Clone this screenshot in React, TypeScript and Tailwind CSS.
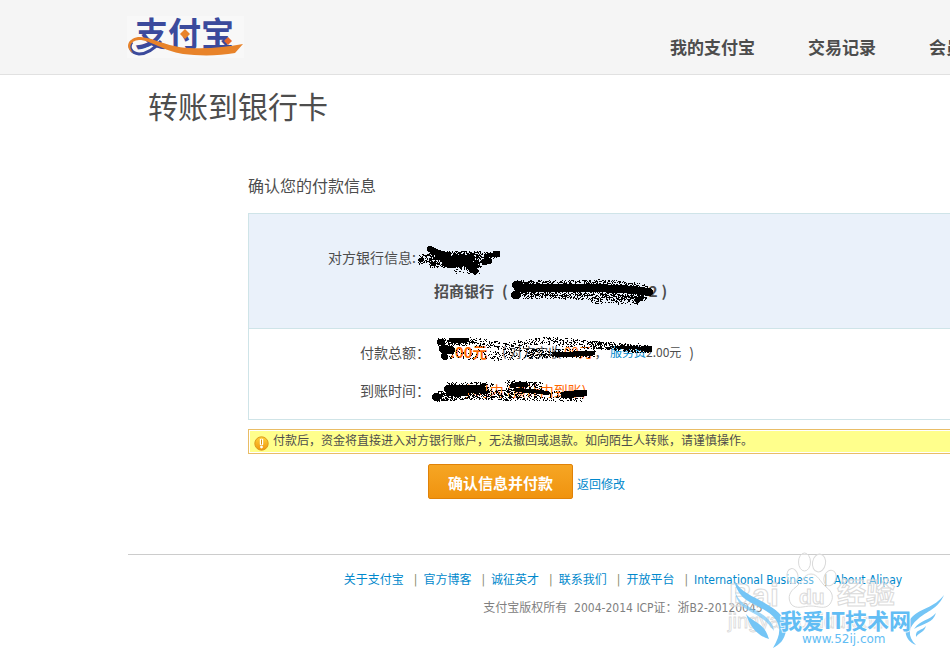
import { clsx } from "clsx";

type Point = [number, number];

type Spray = {
  line: Point[];
  spread: number;
  count: number;
};

const NAV_LINKS = ["我的支付宝", "交易记录", "会员"];

const FOOTER_LINKS = [
  "关于支付宝",
  "官方博客",
  "诚征英才",
  "联系我们",
  "开放平台",
  "International Business",
  "About Alipay",
];

// Small seeded generator so the speckles land in the same place every render
function makeRandom(seed: number) {
  let s = seed;
  return () => {
    s = (s * 16807) % 2147483647;
    return s / 2147483647;
  };
}

function sprayPath(sprays: Spray[], seed: number) {
  const rand = makeRandom(seed);
  let d = "";
  for (const { line, spread, count } of sprays) {
    for (let i = 0; i < count; i++) {
      const t = rand() * (line.length - 1);
      const k = Math.floor(t);
      const [x0, y0] = line[k];
      const [x1, y1] = line[k + 1];
      const x = Math.round(x0 + (x1 - x0) * (t - k) + (rand() - 0.5) * 3);
      const y = Math.round(y0 + (y1 - y0) * (t - k) + (rand() - 0.5) * 2 * spread);
      d += `M${x} ${y}h1v1h-1z`;
    }
  }
  return d;
}

function Scribble({
  width,
  height,
  strokes,
  sprays,
  seed,
  className,
}: {
  width: number;
  height: number;
  strokes: { d: string; w: number }[];
  sprays: Spray[];
  seed: number;
  className?: string;
}) {
  return (
    <svg
      width={width}
      height={height}
      viewBox={`0 0 ${width} ${height}`}
      shapeRendering="crispEdges"
      aria-hidden="true"
      className={clsx("pointer-events-none absolute max-w-none overflow-visible", className)}
    >
      {strokes.map((s) => (
        <path
          key={s.d}
          d={s.d}
          fill="none"
          stroke="#000"
          strokeWidth={s.w}
          strokeLinecap="round"
          strokeLinejoin="round"
        />
      ))}
      <path d={sprayPath(sprays, seed)} fill="#000" />
    </svg>
  );
}

function Logo() {
  return (
    <svg
      width="117"
      height="42"
      viewBox="0 0 117 42"
      role="img"
      aria-label="支付宝"
      className="overflow-visible"
    >
      <rect width="117" height="42" fill="#f8f8f8" />
      <text
        x="8"
        y="30"
        fontSize="33"
        fontWeight="700"
        fill="#3b4a9c"
        className="font-['Noto_Sans_CJK_SC',sans-serif]"
      >
        支付宝
      </text>
      <path
        d="M34 25C28 32 20 38 12 38C4 37 1 31 5 26"
        fill="none"
        stroke="#3b4a9c"
        strokeWidth="3"
      />
      <path
        d="M6 37C-2 32 0 23 11 21C27 21 38 31 62 32C82 33 99 31 116 28L108 37C92 40 72 40 56 38C36 35 24 24 12 24C3 25 1 31 6 37Z"
        fill="#e8832a"
      />
      <path d="M58 13l5 5-5 5-5-5z" fill="#e8832a" />
      <path d="M101 21l4 4-4 4-4-4z" fill="#e5672c" />
    </svg>
  );
}

function WarnIcon() {
  return (
    <svg width="15" height="15" viewBox="0 0 15 15" aria-hidden="true">
      <defs>
        <linearGradient id="warn" x1="0" y1="0" x2="0" y2="1">
          <stop offset="0" stopColor="#ffd23a" />
          <stop offset="1" stopColor="#f0960e" />
        </linearGradient>
      </defs>
      <circle cx="7.5" cy="7.5" r="6.7" fill="url(#warn)" stroke="#dd9a1c" />
      <rect x="5.8" y="2.8" width="3.4" height="6.4" rx="1" fill="#fff" />
      <rect x="7" y="3.5" width="1" height="5" fill="#e0930f" />
      <circle cx="7.5" cy="11.1" r="1.4" fill="#fff" />
    </svg>
  );
}

function Watermark() {
  return (
    <svg
      width="230"
      height="104"
      viewBox="0 0 230 104"
      aria-hidden="true"
      className="pointer-events-none absolute right-0 bottom-0"
    >
      <g
        fill="#fff"
        fillOpacity="0.4"
        stroke="#dadada"
        strokeWidth="1"
        className="font-['Liberation_Sans','Noto_Sans_CJK_SC',sans-serif]"
      >
        <text x="9" y="56" fontSize="32" fontWeight="700">
          Bai
        </text>
        <ellipse cx="72.5" cy="26" rx="5.5" ry="7.5" transform="rotate(-12 72.5 26)" />
        <ellipse cx="84.5" cy="12" rx="6" ry="9" />
        <ellipse cx="99" cy="13" rx="6.5" ry="9" transform="rotate(10 99 13)" />
        <ellipse cx="110" cy="28" rx="6" ry="8" transform="rotate(18 110 28)" />
        <path d="M91 24C98 24 100 32 106 37C113 42 114 48 110 54C105 60 98 56 91 56C84 56 76 60 71 54C67 47 70 41 76 37C82 32 84 24 91 24Z" />
        <text x="79" y="54" fontSize="21" fontWeight="700">
          du
        </text>
        <text x="117" y="54" fontSize="29" fontWeight="700">
          经验
        </text>
        <text x="8" y="78" fontSize="20" strokeWidth="0.8">
          jingyan.baidu.com
        </text>
      </g>
      <g fill="#74c5f6">
        <path d="M14 30C22 44 36 47 48 55C60 62 67 70 66 80C65 90 59 95 53 98C59 88 62 79 56 70C50 61 38 57 28 51C20 46 16 39 14 30Z" />
        <path d="M15 41C18 52 27 56 37 61C46 66 53 72 54 81C48 72 41 67 33 63C23 58 16 52 15 41Z" fillOpacity="0.7" />
        <path d="M26 64C32 72 44 72 49 89C38 86 30 77 26 64Z" />
        <path d="M224 45C218 59 207 61 198 69C188 77 187 86 196 95C183 90 183 76 192 67C201 58 214 58 224 45Z" />
        <path d="M216 63C213 73 204 73 194 79C201 69 209 71 216 63Z" />
        <path d="M206 76C204 83 199 82 196 87C195 79 202 81 206 76Z" />
      </g>
      <g
        fill="#62bdf4"
        stroke="#fff"
        strokeWidth="2"
        strokeOpacity="0.8"
        paintOrder="stroke"
        fontWeight="700"
      >
        <text
          x="60"
          y="79"
          fontSize="22"
          className="font-['Noto_Sans_CJK_SC',sans-serif]"
        >
          我爱IT技术网
        </text>
        <text
          x="82"
          y="93"
          fontSize="12"
          fontWeight="400"
          className="font-['DejaVu_Sans',sans-serif]"
        >
          www.52ij.com
        </text>
      </g>
    </svg>
  );
}

function Header() {
  return (
    <header className="flex h-[75px] border-b border-[#e1e1e1] bg-[#f5f5f5] pl-[127px]">
      <a href="#" className="mt-4 h-[42px] shrink-0">
        <Logo />
      </a>
      <nav className="mt-[35px] ml-[426px] flex gap-[53px] text-[17px] leading-6 font-bold whitespace-nowrap text-[#4d4d4d]">
        {NAV_LINKS.map((label) => (
          <a key={label} href="#">
            {label}
          </a>
        ))}
      </nav>
    </header>
  );
}

function PaymentInfo() {
  return (
    <div className="border border-r-0 border-[#cfe4e8] text-sm leading-6 whitespace-nowrap">
      <div className="border-b border-[#cfe4e8] bg-[#eaf1fa] pt-[31px] pb-[25px]">
        <div className="relative flex">
          <span className="w-[181px] pr-3.5 text-right">对方银行信息:</span>
          <Scribble
            className="top-0 left-[169px]"
            width={84}
            height={30}
            seed={17}
            strokes={[
              { d: "M12 4L18 7L28 10", w: 6 },
              { d: "M20 12L32 14L54 13", w: 6 },
              { d: "M27 18L34 20L48 18", w: 6 },
              { d: "M68 11L79 9", w: 4 },
              { d: "M78 9L79 9", w: 7 },
              { d: "M66 17L71 16", w: 6 },
              { d: "M50 20L57 26", w: 7 },
              { d: "M2 15L4 14", w: 4 },
            ]}
            sprays={[
              { line: [[1, 14], [14, 14]], spread: 5, count: 80 },
              { line: [[12, 14], [62, 14]], spread: 8, count: 900 },
              { line: [[60, 11], [80, 10]], spread: 4, count: 90 },
              { line: [[36, 24], [60, 25]], spread: 4, count: 60 },
            ]}
          />
        </div>
        <div className="relative mt-2.5 flex pl-[185px] text-[15px] font-bold">
          <span>招商银行</span>
          <span className="ml-2">(</span>
          <span className="ml-[141px]">2</span>
          <span className="ml-1">)</span>
          <Scribble
            className="top-0 left-[262px]"
            width={148}
            height={26}
            seed={53}
            strokes={[
              { d: "M5 6L8 6", w: 8 },
              { d: "M8 9L40 9L80 9L112 10L132 12", w: 8 },
              { d: "M4 16L6 16", w: 8 },
              { d: "M136 13L138 13", w: 8 },
              { d: "M130 19L126 21", w: 5 },
            ]}
            sprays={[
              { line: [[4, 9], [50, 9], [95, 8], [136, 13]], spread: 8, count: 1300 },
              { line: [[12, 16], [70, 17], [134, 18]], spread: 3, count: 280 },
              { line: [[80, 20], [130, 21]], spread: 4, count: 170 },
            ]}
          />
        </div>
      </div>
      <div className="pt-[11px] pb-[17px]">
        <div className="relative flex">
          <span className="w-[181px] text-right">付款总额：</span>
          <span className="ml-5 w-12 text-[15px] font-bold text-[#ff6600]">.00元</span>
          <span className="ml-1 w-[104px] text-[13px]">
            ( 对方实收 <span className="text-[#ff6600]">00元</span> ，
          </span>
          <span className="ml-1 text-xs leading-6">
            <a href="#" className="text-[#0088cc]">
              服务费
            </a>
            2.00元
          </span>
          <span className="ml-2">)</span>
          <Scribble
            className="-top-1 left-[188px]"
            width={216}
            height={26}
            seed={91}
            strokes={[
              { d: "M3 6L5 6", w: 6 },
              { d: "M14 4L30 4", w: 5 },
              { d: "M6 13L14 14", w: 8 },
              { d: "M7 20L8 21", w: 6 },
              { d: "M118 18L136 18L156 17", w: 5 },
              { d: "M180 11L200 12L212 13", w: 3 },
              { d: "M210 13L212 13", w: 7 },
            ]}
            sprays={[
              { line: [[2, 6], [34, 5]], spread: 4, count: 150 },
              { line: [[34, 5], [70, 10], [110, 4], [150, 8], [210, 12]], spread: 4, count: 480 },
              { line: [[4, 17], [60, 19], [110, 17]], spread: 5, count: 200 },
              { line: [[90, 17], [158, 17]], spread: 4, count: 240 },
              { line: [[150, 8], [208, 13]], spread: 4, count: 250 },
            ]}
          />
        </div>
        <div className="relative mt-3.5 flex">
          <span className="w-[181px] text-right">到账时间：</span>
          <span className="ml-6 text-[#ff6600]">2小时内 (预计内到账)</span>
          <Scribble
            className="top-0.5 left-[183px]"
            width={158}
            height={24}
            seed={29}
            strokes={[
              { d: "M4 17L5 17", w: 8 },
              { d: "M16 9L30 9L50 9", w: 8 },
              { d: "M16 14L34 13", w: 5 },
              { d: "M80 6L86 4L94 5", w: 5 },
              { d: "M132 15L152 13", w: 7 },
              { d: "M84 10L100 11L116 13", w: 4 },
            ]}
            sprays={[
              { line: [[6, 16], [40, 14], [80, 15], [150, 16]], spread: 5, count: 800 },
              { line: [[14, 8], [60, 8]], spread: 6, count: 260 },
              { line: [[74, 6], [110, 8]], spread: 6, count: 240 },
            ]}
          />
        </div>
      </div>
    </div>
  );
}

export default function App() {
  return (
    <div className="relative min-h-screen overflow-hidden bg-white font-['Noto_Sans_CJK_SC',sans-serif] text-[#4d4d4d]">
      <Header />

      <main>
        <h1 className="mt-2.5 ml-[148px] text-3xl leading-10">转账到银行卡</h1>

        <section className="mt-12 ml-[248px]">
          <h2 className="mb-4 text-base leading-6">确认您的付款信息</h2>
          <PaymentInfo />

          <div className="mt-[9px] border border-r-0 border-[#e9bd66] py-px pl-px">
            <p className="flex h-[21px] bg-[#ffff8c] pl-1 text-xs leading-[18px] whitespace-nowrap">
              <span className="mt-[5px] mr-1 shrink-0">
                <WarnIcon />
              </span>
              付款后，资金将直接进入对方银行账户，无法撤回或退款。如向陌生人转账，请谨慎操作。
            </p>
          </div>

          <div className="mt-2.5 flex items-center pl-[180px]">
            <button
              type="button"
              className="h-[35px] w-[145px] rounded-xs border border-[#e08208] bg-linear-to-b from-[#f6a623] to-[#f0930e] pt-0.5 text-[15px] leading-6 font-bold text-white"
            >
              确认信息并付款
            </button>
            <a href="#" className="mt-1 ml-1 text-xs text-[#0088cc]">
              返回修改
            </a>
          </div>
        </section>
      </main>

      <footer className="mt-[55px] ml-32 min-w-[990px] border-t border-[#cccccc] pt-[15px] font-['DejaVu_Sans_Condensed','Noto_Sans_CJK_SC',sans-serif] text-xs leading-5">
        <ul className="flex justify-center">
          {FOOTER_LINKS.map((label, i) => (
            <li key={label} className="flex">
              {i > 0 && <span className="mr-1.5 ml-2.5 text-[#8a8a6a]">|</span>}
              <a href="#" className="text-[#0088cc]">
                {label}
              </a>
            </li>
          ))}
        </ul>
        <p className="mt-2 text-center text-[#808080]">
          支付宝版权所有&nbsp; 2004-2014 ICP证：浙B2-20120045
        </p>
      </footer>

      <Watermark />
    </div>
  );
}
